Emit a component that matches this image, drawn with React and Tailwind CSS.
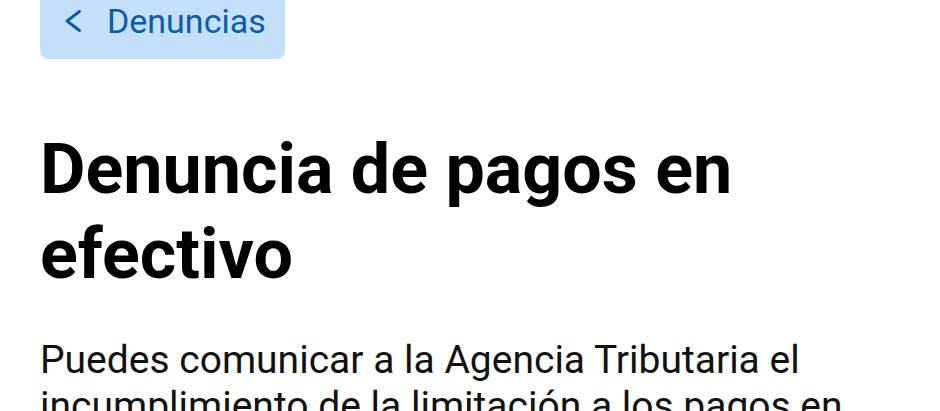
export default function App() {
  return (
    <div className="min-h-screen bg-white px-10" style={{ fontFamily: 'Roboto, "Noto Sans", sans-serif' }}>
      {/* Back button */}
      <div className="-mt-4 inline-flex items-center gap-[25px] rounded-lg bg-[#c4e0f9] pl-[24px] pr-[19px] pt-[17px] pb-[18px] text-[#0b5ca8]">
        <svg width="18" height="24" viewBox="0 0 18 24" fill="none" className="shrink-0">
          <path d="M15.5 2.5 L3 12 L15.5 21.5" stroke="currentColor" strokeWidth="3" strokeLinecap="round" strokeLinejoin="round" />
        </svg>
        <span className="text-[34px] leading-[40px]">Denuncias</span>
      </div>

      {/* Title */}
      <h1 className="mt-[68px] text-[70px] font-bold leading-[85px] text-black">
        Denuncia de pagos en efectivo
      </h1>

      {/* Body */}
      <p className="mt-[40px] text-[39px] leading-[46px] text-[#111]">
        Puedes comunicar a la Agencia Tributaria el incumplimiento de la limitación a los pagos en efectivo.
      </p>
    </div>
  );
}
